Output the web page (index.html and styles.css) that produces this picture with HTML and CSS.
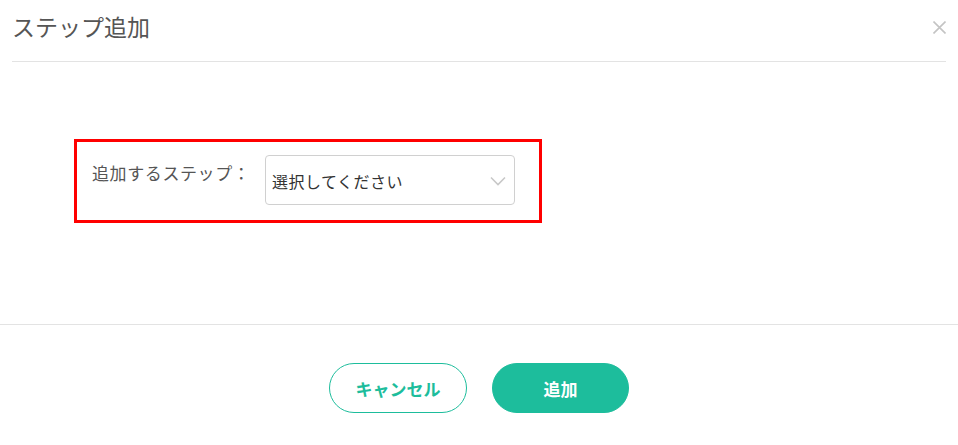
FILE: index.html
```html
<!DOCTYPE html>
<html lang="ja">
<head>
<meta charset="utf-8">
<link rel="stylesheet" href="styles.css">
</head>
<body>
<div class="modal">
  <div class="modal-header">
    <h2 class="modal-title">ステップ追加</h2>
    <svg class="close" width="13" height="13" viewBox="0 0 13 13"><path d="M0.5 0.5 L12.5 12.5 M12.5 0.5 L0.5 12.5" stroke="#c4c4c4" stroke-width="1.6" fill="none"/></svg>
  </div>
  <div class="modal-body">
    <div class="highlight">
      <label class="field-label">追加するステップ：</label>
      <div class="select">
        <span class="select-text">選択してください</span>
        <svg class="chevron" width="16" height="10" viewBox="0 0 16 10"><path d="M1 1.5 L8 8.5 L15 1.5" fill="none" stroke="#c8c8c8" stroke-width="1.6"/></svg>
      </div>
    </div>
  </div>
  <div class="modal-footer">
    <button class="btn btn-outline">キャンセル</button>
    <button class="btn btn-primary">追加</button>
  </div>
</div>
</body>
</html>
```

FILE: styles.css
```css
* { box-sizing: border-box; }
html, body { margin: 0; padding: 0; background: #fff; }
body {
  font-family: "Noto Sans CJK JP", "Noto Sans", sans-serif;
  color: #555;
}
.modal { width: 958px; height: 445px; }
.modal-header {
  margin: 0 12px;
  height: 62px;
  border-bottom: 1px solid #e3e3e3;
  display: flex;
  align-items: flex-start;
  justify-content: space-between;
}
.modal-title {
  margin: 0;
  padding-top: 10px;
  font-size: 23px;
  font-weight: 400;
  line-height: 32px;
  color: #555;
}
.close {
  display: block;
  margin-top: 21px;
  margin-right: 0;
}
.modal-body {
  height: 262px;
  padding: 77px 0 0 74px;
}
.highlight {
  width: 468px;
  height: 84px;
  border: 3px solid #ff0000;
  display: flex;
  align-items: flex-start;
  padding-left: 15px;
}
.field-label {
  font-size: 17px;
  letter-spacing: 0.6px;
  line-height: 24px;
  margin-top: 19px;
  color: #555;
  width: 173px;
  white-space: nowrap;
}
.select {
  margin-top: 13px;
  width: 250px;
  height: 50px;
  border: 1px solid #d0d0d0;
  border-radius: 4px;
  display: flex;
  align-items: center;
  justify-content: space-between;
  padding: 2px 8px 0 6px;
}
.select-text { font-size: 16px; letter-spacing: 0.5px; color: #333; }
.chevron { display: block; }
.modal-footer {
  border-top: 1px solid #e3e3e3;
  display: flex;
  justify-content: center;
  gap: 25px;
  padding-top: 38px;
}
.btn {
  width: 138px;
  height: 50px;
  border-radius: 25px;
  font-family: "Noto Sans CJK JP", sans-serif;
  font-size: 17px;
  font-weight: 700;
  cursor: pointer;
}
.btn-outline {
  background: #fff;
  border: 1px solid #1dbd9c;
  color: #1dbd9c;
}
.btn-primary {
  width: 137px;
  background: #1dbd9c;
  border: 1px solid #1dbd9c;
  color: #fff;
}
```
